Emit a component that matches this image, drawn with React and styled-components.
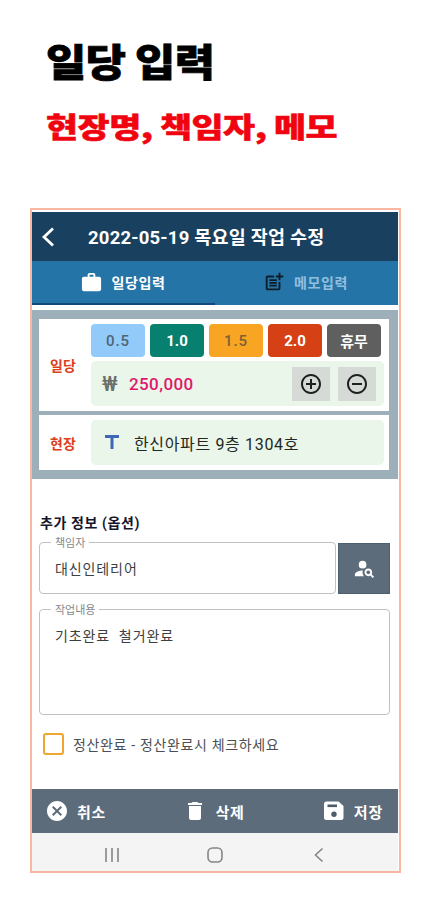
import React, { useState } from 'react';
import styled, { createGlobalStyle } from 'styled-components';
import { MdWork, MdOutlinePostAdd, MdAddCircleOutline, MdRemoveCircleOutline, MdPersonSearch, MdCancel, MdDelete } from 'react-icons/md';

const GlobalStyle = createGlobalStyle`
    * {
        box-sizing: border-box;
    }

    body {
        margin: 0;
        background-color: #ffffff;
        font-family: Roboto, "Noto Sans CJK KR", sans-serif;
    }

    button {
        font-family: inherit;
        border: none;
        padding: 0;
    }
`;

const Page = styled.div`
    width: 443px;
    height: 900px;
    padding-left: 30px;
    overflow: hidden;
`;

const Intro = styled.div`
    height: 208px;
    padding: 33px 0 0 16px;
    font-family: "Noto Sans CJK KR", sans-serif;
    font-weight: 900;
    white-space: nowrap;
`;

const Title = styled.div`
    font-size: 38px;
    line-height: 54px;
    letter-spacing: -0.4px;
    color: #000000;
    -webkit-text-stroke: 0.8px #000000;
    transform: scaleX(1.15);
    transform-origin: left;
`;

const SubTitle = styled.div`
    margin-top: 18px;
    font-size: 28px;
    line-height: 42px;
    letter-spacing: -0.4px;
    color: #f00410;
    -webkit-text-stroke: 0.5px #f00410;
    transform: scaleX(1.245);
    transform-origin: left;
`;

const Phone = styled.div`
    width: 371px;
    height: 665px;
    border: 2px solid #f8b7a3;
    padding: 2px 1px 0 0;
    display: flex;
    flex-direction: column;
`;

const Header = styled.div`
    height: 49px;
    background-color: #19415f;
    display: flex;
    align-items: center;
    padding-left: 9px;
    color: #ffffff;

    svg {
        margin-right: 33px;
    }
`;

const HeaderText = styled.div`
    margin-top: -2px;
    font-size: 18.5px;
    font-weight: 700;
    letter-spacing: 0.2px;
    white-space: nowrap;
`;

const Tabs = styled.div`
    height: 44px;
    display: flex;
    background-color: #2574a7;
`;

const Tab = styled.div`
    flex: 1;
    display: flex;
    align-items: center;
    justify-content: center;
    gap: 9px;
    padding: 0 2px 0 0;
    border-bottom: 2px solid ${props => props.$active ? '#124a78' : '#2574a7'};
    color: ${props => props.$active ? '#ffffff' : '#93bfdf'};
    font-size: 14px;
    font-weight: 700;
    letter-spacing: 0.6px;

    svg {
        color: ${props => props.$active ? '#ffffff' : '#0c1c28'};
    }
`;

const Panel = styled.div`
    margin-top: 5px;
    height: 169px;
    background-color: #9db0ba;
    padding: 9px 9px 9px 7px;
    display: flex;
    flex-direction: column;
    gap: 4px;
`;

const Row = styled.div`
    height: ${props => props.$height}px;
    background-color: #ffffff;
    display: flex;
    align-items: center;
`;

const RowLabel = styled.div`
    width: 52px;
    padding-left: 11px;
    font-size: 14px;
    font-weight: 700;
    color: #dc3f20;
    white-space: nowrap;
`;

const RowBody = styled.div`
    width: 293px;
    display: flex;
    flex-direction: column;
    gap: 4px;
`;

const Chips = styled.div`
    display: flex;
    gap: 5px;
`;

const Chip = styled.button`
    width: 54px;
    height: 33px;
    border-radius: 4px;
    background-color: ${props => props.$bg};
    color: ${props => props.$color || '#ffffff'};
    font-size: 15px;
    font-weight: ${props => props.$color ? 500 : 700};
    letter-spacing: ${props => props.$color ? 1 : 0}px;
`;

const Field = styled.div`
    height: 45px;
    border-radius: 5px;
    background-color: #e9f6e9;
    display: flex;
    align-items: center;
    white-space: nowrap;
`;

const Won = styled.div`
    width: 38px;
    padding-left: 11px;
    font-size: 20px;
    font-weight: 500;
    color: #6a706a;
`;

const Amount = styled.div`
    flex: 1;
    color: #e0186c;
    font-size: 17px;
    font-weight: 500;
    letter-spacing: 0.4px;
`;

const StepButton = styled.button`
    width: 38px;
    height: 34px;
    margin-right: 8px;
    background-color: #d6dad7;
    color: #1c201e;
    display: flex;
    align-items: center;
    justify-content: center;
`;

const SiteIcon = styled.div`
    width: 43px;
    padding: 0 0 2px 14px;
    display: flex;
    color: #3f67b5;
`;

const SiteName = styled.div`
    font-size: 16px;
    letter-spacing: 0.65px;
    color: #222824;
`;

const Section = styled.div`
    padding: 34px 8px 0 7px;
    flex: 1;
`;

const SectionTitle = styled.div`
    padding-left: 1px;
    font-size: 14px;
    line-height: 20px;
    letter-spacing: 0.6px;
    font-weight: 700;
    color: #15152b;
`;

const ManagerRow = styled.div`
    margin: 2px 0 8px;
    display: flex;
    align-items: flex-end;
    justify-content: space-between;
`;

const Outlined = styled.fieldset`
    margin: 0;
    width: ${props => props.$width}px;
    height: ${props => props.$height}px;
    border: 1.5px solid #bfc1c3;
    border-radius: 4px;
    padding: 0 0 0 15px;
    min-width: 0;
    font-size: 14px;
    line-height: 20px;
    letter-spacing: 0.9px;
    color: #3c3f42;
    white-space: pre;
`;

const Legend = styled.legend`
    height: 14px;
    margin-left: -4px;
    padding: 0 4px;
    font-size: 11px;
    line-height: 18px;
    letter-spacing: 0;
    color: #85888b;
`;

const FieldText = styled.div`
    margin-top: 10px;
`;

const SearchButton = styled.button`
    width: 52px;
    height: 51px;
    background-color: #5d6c7a;
    border: 1px solid #4c5f6e;
    color: #ffffff;
    display: flex;
    align-items: center;
    justify-content: center;
`;

const CheckRow = styled.div`
    margin: 18px 0 0 4px;
    display: flex;
    align-items: center;
    gap: 9px;
    font-size: 14px;
    letter-spacing: 0.65px;
    color: #4b4f54;
    white-space: nowrap;
`;

const CheckBox = styled.div`
    width: 21px;
    height: 22px;
    border: 2px solid #f0a431;
    border-radius: 3px;
`;

const Footer = styled.div`
    height: 44px;
    background-color: #5d6c7a;
    color: #ffffff;
    display: flex;
    align-items: center;
    justify-content: space-between;
    padding: 0 15px 0 13px;
`;

const Action = styled.div`
    display: flex;
    align-items: center;
    gap: 8px;
    font-size: 15px;
    font-weight: 700;
    letter-spacing: 0.8px;
`;

const SystemBar = styled.div`
    height: 38px;
    background-color: #f4f4f4;
    display: flex;
    align-items: center;
    padding: 5px 0 0 70px;

    svg:nth-child(2) {
        margin: 0 89px 0 84px;
    }
`;

const SaveIcon = () => (
    <svg width="24" height="24" viewBox="0 0 24 24">
        <path fill="#ffffff" d="M4.5 2.5H16.5L21.5 7V18.5A2.5 2.5 0 0 1 19 21H4.5A2.5 2.5 0 0 1 2 18.5V5A2.5 2.5 0 0 1 4.5 2.5Z" />
        <rect x="5.5" y="5.5" width="9.5" height="2.6" fill="#4d5c69" />
        <circle cx="12" cy="15.3" r="2.7" fill="#4d5c69" />
    </svg>
);

const chips = [
    { label: '0.5', bg: '#92caf9', color: '#4f6475' },
    { label: '1.0', bg: '#07806f' },
    { label: '1.5', bg: '#f7a522', color: '#7d6134' },
    { label: '2.0', bg: '#d64015' },
    { label: '휴무', bg: '#5f5f5f' },
];

function App() {
    const [tab, setTab] = useState(0);

    return (
        <>
            <GlobalStyle />
            <Page>
                <Intro>
                    <Title>일당 입력</Title>
                    <SubTitle>현장명, 책임자, 메모</SubTitle>
                </Intro>
                <Phone>
                    <Header>
                        <svg width="14" height="20" viewBox="0 0 14 20" fill="none" stroke="currentColor" strokeWidth="2.8">
                            <path d="M12 1.5L3 10L12 18.5" />
                        </svg>
                        <HeaderText>2022-05-19 목요일 작업 수정</HeaderText>
                    </Header>
                    <Tabs>
                        <Tab $active={tab === 0} onClick={() => setTab(0)}>
                            <MdWork size={23} />
                            일당입력
                        </Tab>
                        <Tab $active={tab === 1} onClick={() => setTab(1)}>
                            <MdOutlinePostAdd size={22} />
                            메모입력
                        </Tab>
                    </Tabs>
                    <Panel>
                        <Row $height={92}>
                            <RowLabel>일당</RowLabel>
                            <RowBody>
                                <Chips>
                                    {chips.map(chip => (
                                        <Chip key={chip.label} $bg={chip.bg} $color={chip.color}>{chip.label}</Chip>
                                    ))}
                                </Chips>
                                <Field>
                                    <Won>₩</Won>
                                    <Amount>250,000</Amount>
                                    <StepButton><MdAddCircleOutline size={24} /></StepButton>
                                    <StepButton><MdRemoveCircleOutline size={24} /></StepButton>
                                </Field>
                            </RowBody>
                        </Row>
                        <Row $height={55}>
                            <RowLabel>현장</RowLabel>
                            <RowBody>
                                <Field>
                                    <SiteIcon>
                                        <svg width="14" height="14" viewBox="0 0 14 14" fill="none" stroke="currentColor" strokeWidth="3">
                                            <path d="M0 1.5H14M7 1.5V14" />
                                        </svg>
                                    </SiteIcon>
                                    <SiteName>한신아파트 9층 1304호</SiteName>
                                </Field>
                            </RowBody>
                        </Row>
                    </Panel>
                    <Section>
                        <SectionTitle>추가 정보 (옵션)</SectionTitle>
                        <ManagerRow>
                            <Outlined $width={297} $height={59}>
                                <Legend>책임자</Legend>
                                <FieldText>대신인테리어</FieldText>
                            </Outlined>
                            <SearchButton><MdPersonSearch size={23} /></SearchButton>
                        </ManagerRow>
                        <Outlined $width={351} $height={113}>
                            <Legend>작업내용</Legend>
                            <FieldText>{'기초완료  철거완료'}</FieldText>
                        </Outlined>
                        <CheckRow>
                            <CheckBox />
                            정산완료 - 정산완료시 체크하세요
                        </CheckRow>
                    </Section>
                    <Footer>
                        <Action><MdCancel size={24} />취소</Action>
                        <Action><MdDelete size={24} />삭제</Action>
                        <Action><SaveIcon />저장</Action>
                    </Footer>
                    <SystemBar>
                        <svg width="20" height="16" viewBox="0 0 20 16" stroke="#858585" strokeWidth="1.6">
                            <path d="M4 1V15M10 1V15M16 1V15" />
                        </svg>
                        <svg width="18" height="16" viewBox="0 0 18 16" fill="none" stroke="#858585" strokeWidth="1.6">
                            <rect x="2" y="1" width="14" height="14" rx="4.5" />
                        </svg>
                        <svg width="12" height="16" viewBox="0 0 12 16" fill="none" stroke="#858585" strokeWidth="1.6">
                            <path d="M9.5 1.5L2.5 8L9.5 14.5" />
                        </svg>
                    </SystemBar>
                </Phone>
            </Page>
        </>
    );
}

export default App;
